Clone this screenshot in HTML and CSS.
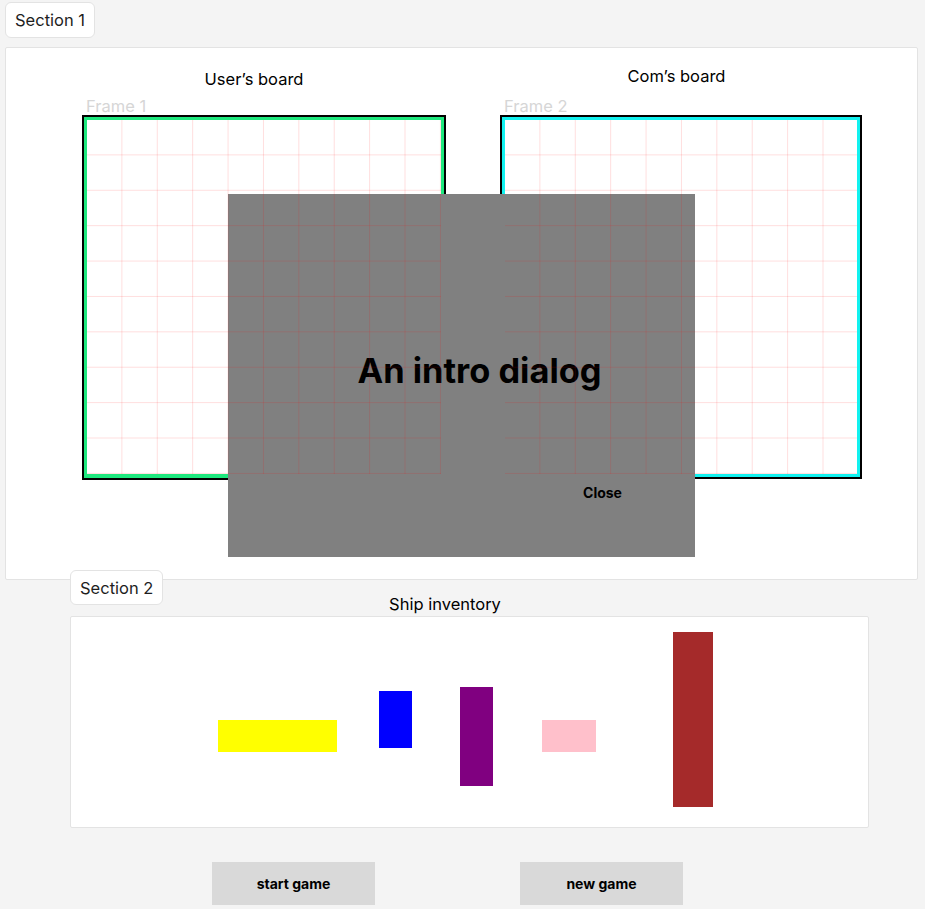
FILE: index.html
```html
<!DOCTYPE html>
<html lang="en">
<head>
<meta charset="utf-8">
<title>Battleship</title>
<link rel="stylesheet" href="styles.css">
</head>
<body>
  <div class="section-label section-label--one">Section 1</div>
  <section class="panel panel--boards">
    <div class="board board--user">
      <h2 class="board-title">User’s board</h2>
      <div class="frame-label">Frame 1</div>
      <div class="frame">
        <div class="frame-inner frame-inner--green">
          <div class="grid"></div>
        </div>
      </div>
    </div>
    <div class="board board--com">
      <h2 class="board-title">Com’s board</h2>
      <div class="frame-label">Frame 2</div>
      <div class="frame">
        <div class="frame-inner frame-inner--cyan">
          <div class="grid"></div>
        </div>
      </div>
    </div>
  </section>

  <div class="section-two">
    <div class="section-label section-label--two">Section 2</div>
    <h2 class="inventory-title">Ship inventory</h2>
    <div class="panel panel--ships">
      <div class="ship ship--yellow"></div>
      <div class="ship ship--blue"></div>
      <div class="ship ship--purple"></div>
      <div class="ship ship--pink"></div>
      <div class="ship ship--brown"></div>
    </div>
  </div>

  <div class="actions">
    <button class="btn">start game</button>
    <button class="btn">new game</button>
  </div>

  <div class="dialog">
    <div class="dialog-title">An intro dialog</div>
    <button class="dialog-close">Close</button>
  </div>
</body>
</html>
```

FILE: styles.css
```css
* { box-sizing: border-box; }

html, body {
  margin: 0;
  padding: 0;
}

body {
  background: #f4f4f4;
  font-family: Inter, "Noto Sans", sans-serif;
  color: #1e1e1e;
  width: 925px;
  min-height: 909px;
  position: relative;
  overflow: hidden;
}

.section-label {
  display: inline-block;
  background: #ffffff;
  border: 1px solid #e3e3e3;
  border-radius: 6px;
  font-size: 16.5px;
  line-height: 20px;
  padding: 7px 9px 7px 9px;
  color: #1e1e1e;
}

.section-label--one {
  margin: 2px 0 0 5px;
}

.panel {
  background: #ffffff;
  border: 1px solid #e3e3e3;
  border-radius: 2px;
}

.panel--boards {
  margin: 9px 0 0 5px;
  width: 913px;
  height: 533px;
  display: flex;
  align-items: flex-start;
  padding-left: 76px;
  gap: 54px;
}

.board {
  display: flex;
  flex-direction: column;
}

.board-title {
  margin: 21px 0 8px 0;
  font-size: 16.5px;
  font-weight: 400;
  line-height: 20px;
  text-align: center;
  padding-right: 20px;
  color: #000;
}

.board--com .board-title {
  margin: 18px 0 11px 0;
  padding-right: 9px;
}

.frame-label {
  font-size: 16.5px;
  line-height: 18px;
  color: #d6d6d6;
  padding-left: 4px;
}

.frame {
  border: 2px solid #000;
  width: 364px;
}

.board--com .frame {
  width: 362px;
}

.frame-inner {
  border: 3px solid #1ee87e;
  border-bottom-width: 4px;
  background: #ffffff;
}

.frame-inner--cyan {
  border-color: #12f2f0;
  border-bottom-width: 3px;
}

.grid {
  position: relative;
  height: 354px;
}

.grid::after {
  content: "";
  position: absolute;
  left: 0;
  top: 0;
  width: 354px;
  height: 354px;
  z-index: 3;
  pointer-events: none;
  background-image:
    linear-gradient(to right, rgba(255, 0, 0, 0.13) 1px, transparent 1px),
    linear-gradient(to bottom, rgba(255, 0, 0, 0.13) 1px, transparent 1px);
  background-size: 35.4px 35.4px;
  background-position: -1px -1px;
}

.board--com .grid::after {
  width: 352px;
}

.dialog {
  position: absolute;
  left: 228px;
  top: 194px;
  width: 467px;
  height: 363px;
  background: #808080;
  z-index: 2;
  display: flex;
  flex-direction: column;
  align-items: center;
}

.dialog-title {
  margin-top: 156px;
  padding-left: 36px;
  font-size: 34.4px;
  line-height: 42px;
  font-weight: 700;
  color: #000;
}

.dialog-close {
  margin: 92px 0 0 282px;
  background: none;
  border: 0;
  padding: 0;
  font-family: inherit;
  font-size: 14px;
  font-weight: 700;
  line-height: 18px;
  color: #000;
}

.section-two {
  margin: -10px 0 0 70px;
  display: flex;
  flex-direction: column;
  align-items: flex-start;
}

.section-label--two {
  position: relative;
  z-index: 1;
  padding: 7px 9px 6px 9px;
}

.inventory-title {
  margin: -11px 0 0 0;
  width: 799px;
  text-align: center;
  padding-right: 49px;
  font-size: 16.5px;
  font-weight: 400;
  line-height: 20px;
  color: #000;
}

.panel--ships {
  margin-top: 2px;
  width: 799px;
  height: 212px;
  display: flex;
  align-items: flex-start;
  padding-left: 147px;
}

.ship { flex: none; }

.ship--yellow { background: #ffff00; width: 119px; height: 32px; margin-top: 103px; }
.ship--blue   { background: #0000ff; width: 33px;  height: 57px; margin: 74px 0 0 42px; }
.ship--purple { background: #800080; width: 33px;  height: 99px; margin: 70px 0 0 48px; }
.ship--pink   { background: #ffc0cb; width: 54px;  height: 32px; margin: 103px 0 0 49px; }
.ship--brown  { background: #a52a2a; width: 40px;  height: 175px; margin: 15px 0 0 77px; }

.actions {
  margin: 34px 0 0 212px;
  display: flex;
  gap: 145px;
}

.btn {
  width: 163px;
  height: 43px;
  background: #d9d9d9;
  border: 0;
  padding: 0;
  font-family: inherit;
  font-size: 14px;
  font-weight: 700;
  color: #000;
}
```
